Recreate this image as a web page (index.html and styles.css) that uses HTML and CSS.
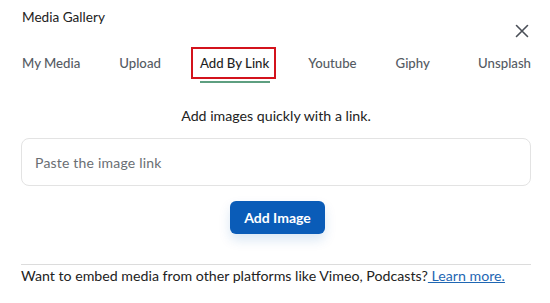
FILE: index.html
```html
<!DOCTYPE html>
<html lang="en">
<head>
    <meta charset="UTF-8">
    <meta name="viewport" content="width=device-width, initial-scale=1.0">
    <title>Media Gallery</title>
    <link rel="stylesheet" href="styles.css">
</head>
<body>
    <div class="modal">
        <div class="modal-header">
            <h2 class="modal-title">Media Gallery</h2>
            <button class="close-button" aria-label="Close">
                <svg width="14" height="14" viewBox="0 0 14 14">
                    <path d="M1.5 1.5 L12.5 12.5 M12.5 1.5 L1.5 12.5" stroke="#4a4f57" stroke-width="1.6" stroke-linecap="round"/>
                </svg>
            </button>
        </div>

        <nav class="tabs">
            <div class="tab"><span class="tab-label">My Media</span></div>
            <div class="tab"><span class="tab-label">Upload</span></div>
            <div class="tab active"><span class="tab-label">Add By Link</span><span class="tab-bar"></span></div>
            <div class="tab"><span class="tab-label">Youtube</span></div>
            <div class="tab"><span class="tab-label">Giphy</span></div>
            <div class="tab"><span class="tab-label">Unsplash</span></div>
        </nav>

        <p class="intro">Add images quickly with a link.</p>

        <input type="text" class="link-input" placeholder="Paste the image link">

        <div class="actions">
            <button class="add-button">Add Image</button>
        </div>

        <div class="footer">
            Want to embed media from other platforms like Vimeo, Podcasts?<a href="#"> Learn more.</a>
        </div>
    </div>
</body>
</html>
```

FILE: styles.css
```css
body {
    margin: 0;
    font-family: Lato, 'Noto Sans', sans-serif;
    background-color: #fff;
    color: #222;
}
.modal {
    padding: 0 19px 0 21px;
}
.modal-header {
    display: flex;
    justify-content: space-between;
    align-items: flex-start;
    padding-top: 9px;
}
.modal-title {
    margin: 0;
    font-size: 13.6px;
    font-weight: 400;
    line-height: 16px;
    color: #222;
    padding-left: 1px;
}
.close-button {
    margin-top: 15px;
    margin-right: 2px;
    padding: 0;
    border: none;
    background: none;
    width: 14px;
    height: 14px;
    cursor: pointer;
}
.tabs {
    display: flex;
    gap: 39px;
    margin-top: 9px;
    padding-left: 1px;
}
.tab {
    display: flex;
    flex-direction: column;
    align-items: center;
    font-size: 13.2px;
    font-weight: 500;
    color: #555b63;
}
.tab:last-child {
    margin-left: auto;
}
.tab-label {
    padding: 8px 0;
    line-height: 16px;
}
.tab.active {
    color: #1f1f1f;
    margin-left: -9px;
    margin-right: -7px;
}
.tab.active .tab-label {
    padding: 6px 5px 6px 7px;
    border: 2px solid #d3131c;
}
.tab-bar {
    margin-top: 2px;
    width: 70px;
    margin-left: 2px;
    height: 2px;
    background-color: #5e9f80;
}
.intro {
    margin: 24px 0 0;
    text-align: center;
    font-size: 14.2px;
    line-height: 18px;
    color: #222;
}
.link-input {
    display: block;
    box-sizing: border-box;
    width: 100%;
    height: 48px;
    margin-top: 13px;
    padding: 0 13px;
    border: 1px solid #e3e3e3;
    border-radius: 8px;
    font-family: inherit;
    font-size: 14px;
    letter-spacing: 0.2px;
    outline: none;
}
.link-input::placeholder {
    color: #6a6e73;
}
.actions {
    display: flex;
    justify-content: center;
    margin-top: 15px;
    padding-left: 3px;
}
.add-button {
    width: 95px;
    height: 33px;
    padding: 0;
    border: none;
    border-radius: 6px;
    background-color: #0a5cb8;
    color: #fff;
    font-family: inherit;
    font-size: 14px;
    font-weight: 700;
    box-shadow: 0 6px 12px rgba(10, 92, 184, 0.15);
    cursor: pointer;
}
.footer {
    margin-top: 30px;
    padding-top: 2px;
    border-top: 1px solid #dcdcdc;
    font-size: 14.2px;
    line-height: 18px;
    color: #222;
}
.footer a {
    color: #1f67b3;
    text-decoration: underline;
}
```
